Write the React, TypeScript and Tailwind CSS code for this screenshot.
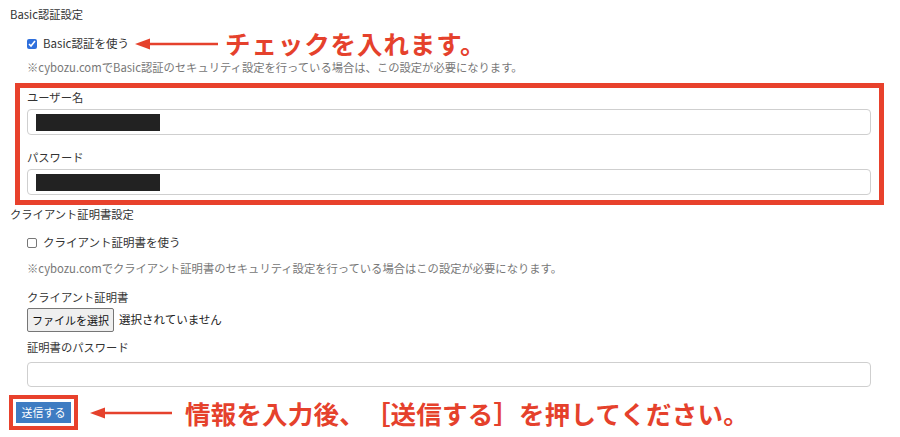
import React from "react";

const font = { fontFamily: '"Noto Sans CJK JP", "Noto Sans", sans-serif' };

function Arrow({ width }: { width: number }) {
  return (
    <svg width={width} height="12" viewBox={`0 0 ${width} 12`} className="shrink-0">
      <line x1="12" y1="6" x2={width} y2="6" stroke="#e5412c" strokeWidth="2.5" />
      <polygon points="0,6 15,0.5 15,11.5" fill="#e5412c" />
    </svg>
  );
}

function TextBox({ redacted }: { redacted?: boolean }) {
  return (
    <div className="flex h-[26px] w-[844px] items-center rounded-[4px] border border-[#cfcfcf] bg-white pl-[8px]">
      {redacted && <div className="h-[17px] w-[124px] bg-[#222]" />}
    </div>
  );
}

export default function App() {
  return (
    <div
      className="h-[437px] w-[900px] overflow-hidden bg-white pl-[10px] text-[11.3px] text-[#333]"
      style={font}
    >
      <div className="mt-[6px] h-[16px] leading-[16px]">Basic認証設定</div>

      <div className="ml-[17px] mt-[13px] flex h-[18px] items-center">
        <input type="checkbox" defaultChecked className="m-0 h-[10px] w-[10px] accent-[#2f6fdc]" />
        <span className="ml-[6px] w-[92px] text-[11.5px]">Basic認証を使う</span>
        <Arrow width={83} />
        <span className="ml-[7px] -mt-[3px] text-[25.5px] font-bold leading-none tracking-[0.9px] text-[#e5412c] [text-spacing-trim:space-all]">
          チェックを入れます。
        </span>
      </div>

      <div className="ml-[17px] mt-[6px] h-[16px] leading-[16px] text-[#777]">
        ※cybozu.comでBasic認証のセキュリティ設定を行っている場合は、この設定が必要になります。
      </div>

      <div className="ml-[5px] mt-[8px] w-[869px] border-[5px] border-[#e8412c] pb-[5px] pl-[7px] pr-[8px] pt-[1px]">
        <div className="h-[16px] leading-[16px]">ユーザー名</div>
        <div className="mt-[4px]">
          <TextBox redacted />
        </div>
        <div className="mt-[14px] h-[16px] leading-[16px]">パスワード</div>
        <div className="mt-[4px]">
          <TextBox redacted />
        </div>
      </div>

      <div className="mt-[1px] h-[16px] leading-[16px]">クライアント証明書設定</div>

      <div className="ml-[17px] mt-[12px] flex h-[18px] items-center">
        <span className="h-[10px] w-[10px] rounded-[2px] border border-[#777] bg-white" />
        <span className="ml-[6px] text-[11.5px]">クライアント証明書を使う</span>
      </div>

      <div className="ml-[17px] mt-[8px] h-[16px] leading-[16px] text-[#777]">
        ※cybozu.comでクライアント証明書のセキュリティ設定を行っている場合はこの設定が必要になります。
      </div>

      <div className="ml-[17px] mt-[13px] h-[16px] leading-[16px]">クライアント証明書</div>

      <div className="ml-[17px] mt-[3px] flex h-[24px] items-center">
        <button className="h-[24px] w-[87px] rounded-[2px] border border-[#767676] bg-[#efefef] px-0 text-[11px] text-[#111]">
          ファイルを選択
        </button>
        <span className="ml-[5px] text-[11.5px] text-[#222]">選択されていません</span>
      </div>

      <div className="ml-[17px] mt-[7px] h-[16px] leading-[16px]">証明書のパスワード</div>

      <div className="ml-[17px] mt-[7px] h-[25px] w-[844px] rounded-[4px] border border-[#cfcfcf] bg-white" />

      <div className="ml-[-1px] mt-[8px] flex items-center">
        <div className="border-4 border-[#e8412c] bg-white p-[3px]">
          <button className="h-[21px] w-[55px] bg-[#3e7cc2] text-[11px] text-white">送信する</button>
        </div>
        <div className="ml-[12px]">
          <Arrow width={82} />
        </div>
        <span className="ml-[13px] text-[25.5px] font-bold leading-none tracking-[0.2px] text-[#e5412c] [text-spacing-trim:space-all]">
          情報を入力後、［送信する］を押してください。
        </span>
      </div>
    </div>
  );
}
